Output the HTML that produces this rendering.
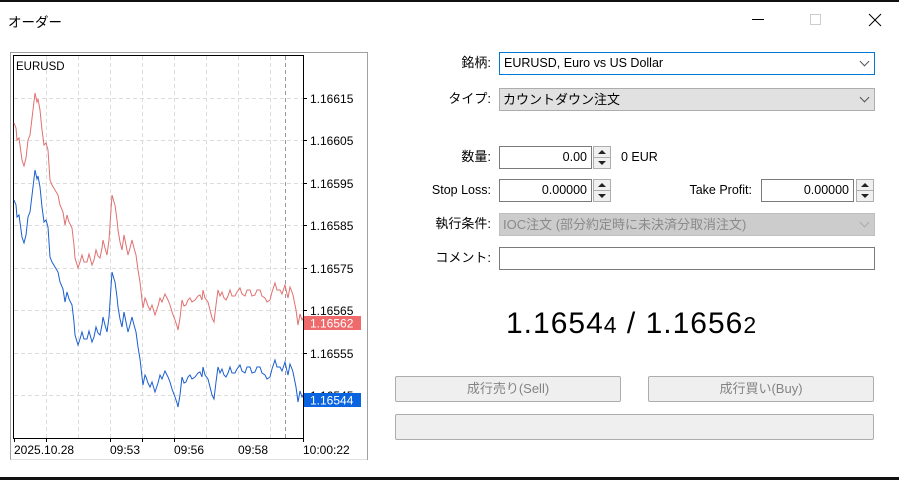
<!DOCTYPE html>
<html><head><meta charset="utf-8"><style>
*{margin:0;padding:0;box-sizing:border-box}
body{width:899px;height:480px;background:#fff;position:relative;overflow:hidden;font-family:"Liberation Sans","Noto Sans CJK JP",sans-serif;font-size:12px;color:#000}
.a{position:absolute}
.lbl{position:absolute;text-align:right;width:120px;font-size:13px;line-height:22px}
.box{position:absolute;border:1px solid #7a7a7a;background:#fff;height:23px;line-height:21px;font-size:12.5px}
.sp{position:absolute;width:18px;height:23px;border:1px solid #adadad;background:#f0f0f0}
.sp:after{content:"";position:absolute;left:0;right:0;top:10px;border-top:1px solid #adadad}
.sp i{position:absolute;left:4px;width:0;height:0;border-left:4px solid transparent;border-right:4px solid transparent}
.sp i.u{top:3px;border-bottom:4px solid #222}
.sp i.d{top:14px;border-top:4px solid #222}
.btn{position:absolute;background:#efefef;border:1px solid #adadad;border-radius:2px;color:#838383;text-align:center;font-size:13px;line-height:23px}
.chev{position:absolute;right:6px;top:5px;width:7px;height:7px;border-right:1px solid #555;border-bottom:1px solid #555;transform:rotate(45deg)}
</style></head><body>
<div class="a" style="left:0;top:0;width:899px;height:2px;background:#111"></div>
<div class="a" style="left:0;top:477px;width:899px;height:3px;background:#111"></div>
<div class="a" style="left:8px;top:11px;font-size:13.5px">オーダー</div>
<div class="a" style="left:752px;top:19px;width:12px;height:1px;background:#000"></div>
<div class="a" style="left:810px;top:14px;width:11px;height:11px;border:1px solid #ccc"></div>
<svg class="a" style="left:868px;top:13px" width="14" height="14"><path d="M1 1L13 13M13 1L1 13" stroke="#000" stroke-width="1"/></svg>

<svg class="a" style="left:0;top:0" width="380" height="470">
<defs><path id="r" fill="none" d="M14 123L16 128L17 140L19 138L22 160L24 166L26 158L28 140L30 135L33 110L35 93L37 102L38 99L40 110L42 130L44 145L46 143L48 150L50 180L52 185L55 190L58 195L60 205L63 212L65 225L67 215L69 222L72 228L74 245L75 258L78 268L80 262L82 255L84 262L87 262L89 254L92 265L94 260L96 250L98 256L100 258L102 248L103 240L105 248L107 255L109 240L110 225L112 195L114 202L115 205L117 220L118 230L120 242L122 250L124 235L126 245L128 255L130 248L132 240L134 248L136 255L138 270L140 282L142 300L143 308L145 298L146 300L148 306L150 310L152 305L155 315L158 306L160 298L162 302L165 294L168 300L170 305L172 312L175 320L177 326L178 330L180 318L182 300L184 306L186 305L188 300L190 298L192 302L195 300L198 296L200 295L202 300L203 290L205 298L208 302L210 310L212 318L214 322L216 305L218 290L220 296L222 292L224 298L226 300L228 296L230 290L232 296L235 296L237 292L240 288L242 294L245 296L247 290L250 290L252 296L255 295L257 290L260 290L262 296L265 298L267 302L270 300L272 292L275 283L277 290L280 290L282 294L285 285L287 294L288 298L290 287L292 292L293 295L295 305L296 310L298 325L300 314L302 320L303 318"/></defs>
<rect x="10.5" y="52.5" width="357" height="407" fill="#fff" stroke="#a0a0a0"/>
<line x1="10.5" y1="459.5" x2="367" y2="459.5" stroke="#e0e0e0"/>
<g stroke="#dcdcdc" stroke-dasharray="4,3">
<line x1="14" y1="98.5" x2="303" y2="98.5"/><line x1="14" y1="140.5" x2="303" y2="140.5"/><line x1="14" y1="183.5" x2="303" y2="183.5"/><line x1="14" y1="225.5" x2="303" y2="225.5"/><line x1="14" y1="268.5" x2="303" y2="268.5"/><line x1="14" y1="310.5" x2="303" y2="310.5"/><line x1="14" y1="353.5" x2="303" y2="353.5"/><line x1="14" y1="395.5" x2="303" y2="395.5"/>
<line x1="46.5" y1="56" x2="46.5" y2="438"/><line x1="78.5" y1="56" x2="78.5" y2="438"/><line x1="110.5" y1="56" x2="110.5" y2="438"/><line x1="142.5" y1="56" x2="142.5" y2="438"/><line x1="174.5" y1="56" x2="174.5" y2="438"/><line x1="206.5" y1="56" x2="206.5" y2="438"/><line x1="238.5" y1="56" x2="238.5" y2="438"/><line x1="270.5" y1="56" x2="270.5" y2="438"/>
</g>
<line x1="285.5" y1="56" x2="285.5" y2="438" stroke="#999" stroke-dasharray="4,3"/>
<path d="M13.5 55.5H303.5V438.5H13.5Z" fill="none" stroke="#000"/>
<g stroke="#000"><line x1="14.5" y1="438" x2="14.5" y2="442"/><line x1="46.5" y1="438" x2="46.5" y2="442"/><line x1="110.5" y1="438" x2="110.5" y2="442"/><line x1="142.5" y1="438" x2="142.5" y2="442"/><line x1="174.5" y1="438" x2="174.5" y2="442"/><line x1="303.5" y1="438" x2="303.5" y2="442"/>
<line x1="303" y1="98.5" x2="307" y2="98.5"/><line x1="303" y1="140.5" x2="307" y2="140.5"/><line x1="303" y1="183.5" x2="307" y2="183.5"/><line x1="303" y1="225.5" x2="307" y2="225.5"/><line x1="303" y1="268.5" x2="307" y2="268.5"/><line x1="303" y1="310.5" x2="307" y2="310.5"/><line x1="303" y1="353.5" x2="307" y2="353.5"/></g>
<use href="#r" stroke="#e07070"/>
<use href="#r" transform="translate(0,77)" stroke="#1a5fd0"/>
<g font-size="12" font-family="Liberation Sans,sans-serif" fill="#000">
<text x="16" y="70" font-size="11.5">EURUSD</text>
<text x="310" y="103">1.16615</text><text x="310" y="145">1.16605</text><text x="310" y="188">1.16595</text><text x="310" y="230">1.16585</text><text x="310" y="273">1.16575</text><text x="310" y="315">1.16565</text><text x="310" y="358">1.16555</text><text x="310" y="400">1.16545</text>
<text x="14" y="454">2025.10.28</text><text x="110" y="454">09:53</text><text x="174" y="454">09:56</text><text x="238" y="454">09:58</text><text x="303" y="454">10:00:22</text>
</g>
<rect x="304" y="316" width="57" height="14" fill="#ef6b6b"/>
<text x="310" y="327.5" font-size="12" fill="#fff" font-family="Liberation Sans,sans-serif">1.16562</text>
<rect x="304" y="393" width="57" height="14" fill="#0a64e0"/>
<text x="310" y="404.5" font-size="12" fill="#fff" font-family="Liberation Sans,sans-serif">1.16544</text>
</svg>

<div class="lbl" style="left:371px;top:52px">銘柄:</div>
<div class="box" style="left:499px;top:52px;width:376px;border-color:#0078d7;padding-left:4px">EURUSD, Euro vs US Dollar<span class="chev"></span></div>
<div class="lbl" style="left:371px;top:88px">タイプ:</div>
<div class="box" style="left:499px;top:88px;width:376px;background:#e1e1e1;border-color:#adadad;padding-left:3px;font-size:13px">カウントダウン注文<span class="chev"></span></div>
<div class="lbl" style="left:371px;top:146px">数量:</div>
<div class="box" style="left:499px;top:146px;width:93px;text-align:right;padding-right:4px">0.00</div>
<div class="sp" style="left:593px;top:146px"><i class="u"></i><i class="d"></i></div>
<div class="a" style="left:621px;top:150px;font-size:12.5px">0 EUR</div>
<div class="lbl" style="left:371px;top:179px;font-size:12.5px">Stop Loss:</div>
<div class="box" style="left:499px;top:179px;width:93px;text-align:right;padding-right:4px">0.00000</div>
<div class="sp" style="left:593px;top:179px"><i class="u"></i><i class="d"></i></div>
<div class="lbl" style="left:632px;top:179px;font-size:12.5px">Take Profit:</div>
<div class="box" style="left:761px;top:179px;width:93px;text-align:right;padding-right:4px">0.00000</div>
<div class="sp" style="left:856px;top:179px"><i class="u"></i><i class="d"></i></div>
<div class="lbl" style="left:371px;top:213px">執行条件:</div>
<div class="box" style="left:499px;top:213px;width:376px;background:#cccccc;border-color:#bfbfbf;color:#8a8a8a;padding-left:3px;font-size:13px">IOC注文 (部分約定時に未決済分取消注文)<span class="chev" style="border-color:#aaa"></span></div>
<div class="lbl" style="left:371px;top:247px">コメント:</div>
<div class="box" style="left:499px;top:247px;width:376px"></div>
<div class="a" style="left:506px;top:306px;font-size:30px;line-height:36px;letter-spacing:1px">1.1654<span style="font-size:23px">4</span> / 1.1656<span style="font-size:23px">2</span></div>
<div class="btn" style="left:395px;top:376px;width:226px;height:26px">成行売り(Sell)</div>
<div class="btn" style="left:648px;top:376px;width:226px;height:26px">成行買い(Buy)</div>
<div class="btn" style="left:395px;top:414px;width:479px;height:26px"></div>
</body></html>
